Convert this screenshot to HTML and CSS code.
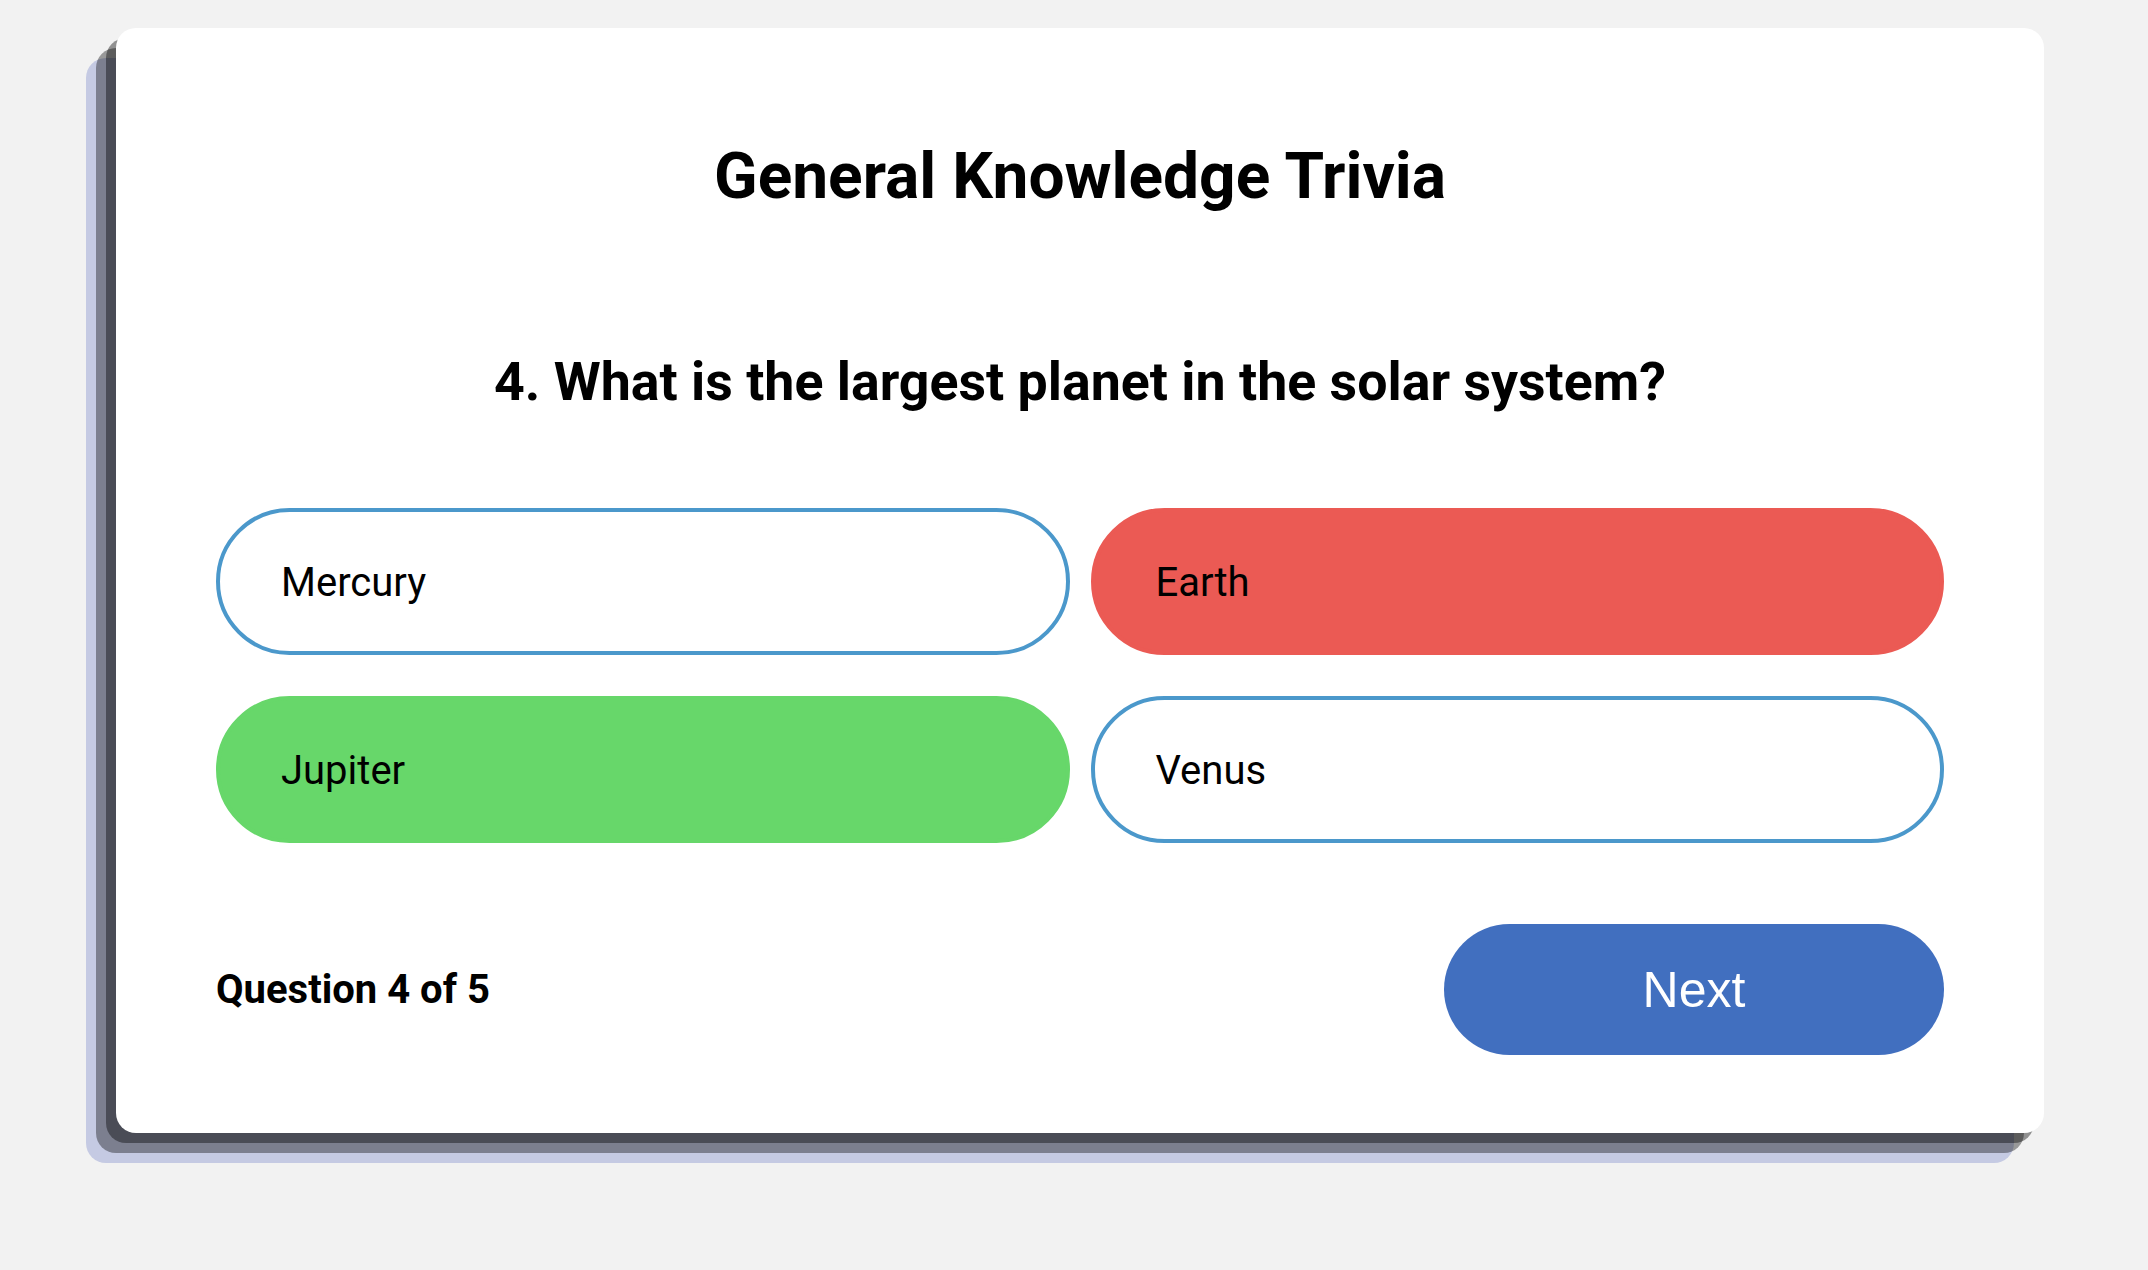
FILE: index.html
```html
<!DOCTYPE html>
<html lang="en">
<head>
<meta charset="utf-8">
<title>General Knowledge Trivia</title>
<link rel="stylesheet" href="styles.css">
</head>
<body>
  <main class="card">
    <h1 class="title">General Knowledge Trivia</h1>
    <h2 class="question">4. What is the largest planet in the solar system?</h2>
    <div class="answers">
      <button class="answer">Mercury</button>
      <button class="answer wrong">Earth</button>
      <button class="answer correct">Jupiter</button>
      <button class="answer">Venus</button>
    </div>
    <div class="footer">
      <span class="progress">Question 4 of 5</span>
      <button class="next">Next</button>
    </div>
  </main>
</body>
</html>
```

FILE: styles.css
```css
html, body {
  margin: 0;
  padding: 0;
}

body {
  background: #f2f2f2;
  font-family: Roboto, "Liberation Sans", Arial, sans-serif;
  color: #000;
  padding: 28px 104px 0 116px;
  min-height: 1270px;
  box-sizing: border-box;
}

.card {
  background: #fff;
  border-radius: 20px;
  box-shadow:
    -10px 10px 0 rgba(0, 0, 0, 0.4),
    -20px 20px 0 rgba(0, 0, 0, 0.37),
    -30px 30px 0 #c5cae3;
  padding: 111px 100px 78px;
  display: flex;
  flex-direction: column;
}

.title {
  margin: 0;
  font-size: 64px;
  font-weight: 700;
  line-height: 75px;
  text-align: center;
}

.question {
  margin: 136px 0 0;
  font-size: 53.7px;
  font-weight: 700;
  line-height: 63px;
  text-align: center;
}

.answers {
  margin-top: 95px;
  display: grid;
  grid-template-columns: 1fr 1fr;
  column-gap: 21px;
  row-gap: 41px;
}

.answer {
  height: 147px;
  border: 4px solid #4b98cb;
  border-radius: 74px;
  background: #fff;
  font-family: Roboto, sans-serif;
  font-size: 40px;
  font-weight: 400;
  color: #000;
  text-align: left;
  padding: 2px 0 0 61px;
  margin: 0;
}

.answer.wrong {
  background: #eb5a54;
  border-color: #eb5a54;
}

.answer.correct {
  background: #67d76a;
  border-color: #67d76a;
}

.footer {
  margin-top: 81px;
  display: flex;
  justify-content: space-between;
  align-items: center;
}

.progress {
  font-size: 40px;
  font-weight: 700;
}

.next {
  width: 500px;
  height: 131px;
  border: none;
  border-radius: 66px;
  background: #416fbf;
  color: #fff;
  font-family: "Liberation Sans", Arial, sans-serif;
  font-size: 50px;
  margin: 0;
  padding: 0;
}
```
